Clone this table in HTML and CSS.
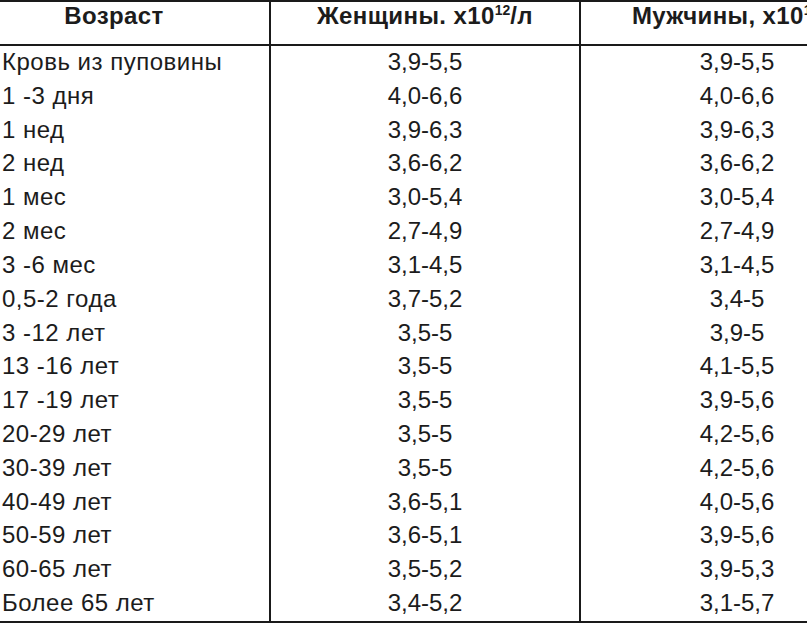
FILE: index.html
```html
<!DOCTYPE html>
<html lang="ru">
<head>
<meta charset="utf-8">
<title>Эритроциты</title>
<link rel="stylesheet" href="styles.css">
</head>
<body>
<div class="table">
  <div class="cell head first"><span class="shift">Возраст</span></div>
  <div class="cell head">Женщины. x10<sup>12</sup>/л</div>
  <div class="cell head last">Мужчины, x10<sup>12</sup>/л</div>

  <div class="cell first">Кровь из пуповины</div><div class="cell">3,9-5,5</div><div class="cell last">3,9-5,5</div>
  <div class="cell first">1 -3 дня</div><div class="cell">4,0-6,6</div><div class="cell last">4,0-6,6</div>
  <div class="cell first">1 нед</div><div class="cell">3,9-6,3</div><div class="cell last">3,9-6,3</div>
  <div class="cell first">2 нед</div><div class="cell">3,6-6,2</div><div class="cell last">3,6-6,2</div>
  <div class="cell first">1 мес</div><div class="cell">3,0-5,4</div><div class="cell last">3,0-5,4</div>
  <div class="cell first">2 мес</div><div class="cell">2,7-4,9</div><div class="cell last">2,7-4,9</div>
  <div class="cell first">3 -6 мес</div><div class="cell">3,1-4,5</div><div class="cell last">3,1-4,5</div>
  <div class="cell first">0,5-2 года</div><div class="cell">3,7-5,2</div><div class="cell last">3,4-5</div>
  <div class="cell first">3 -12 лет</div><div class="cell">3,5-5</div><div class="cell last">3,9-5</div>
  <div class="cell first">13 -16 лет</div><div class="cell">3,5-5</div><div class="cell last">4,1-5,5</div>
  <div class="cell first">17 -19 лет</div><div class="cell">3,5-5</div><div class="cell last">3,9-5,6</div>
  <div class="cell first">20-29 лет</div><div class="cell">3,5-5</div><div class="cell last">4,2-5,6</div>
  <div class="cell first">30-39 лет</div><div class="cell">3,5-5</div><div class="cell last">4,2-5,6</div>
  <div class="cell first">40-49 лет</div><div class="cell">3,6-5,1</div><div class="cell last">4,0-5,6</div>
  <div class="cell first">50-59 лет</div><div class="cell">3,6-5,1</div><div class="cell last">3,9-5,6</div>
  <div class="cell first">60-65 лет</div><div class="cell">3,5-5,2</div><div class="cell last">3,9-5,3</div>
  <div class="cell first">Более 65 лет</div><div class="cell">3,4-5,2</div><div class="cell last">3,1-5,7</div>
</div>
</body>
</html>
```
FILE: styles.css
```css
html, body {
  margin: 0;
  padding: 0;
  background: #ffffff;
  overflow: hidden;
}

.table {
  display: grid;
  grid-template-columns: 271px 310px 312px;
  grid-template-rows: 44px;
  grid-auto-rows: 33.82px;
  width: 893px;
  border-top: 2px solid #1a1a1a;
  border-bottom: 2px solid #1a1a1a;
  font-family: "Liberation Sans", Arial, sans-serif;
  font-size: 24px;
  color: #1c1c1c;
}

.cell {
  box-sizing: border-box;
  text-align: center;
  line-height: 31.4px;
  white-space: nowrap;
}

.cell.first {
  text-align: left;
  padding-left: 2px;
  letter-spacing: 0.5px;
  border-right: 2px solid #1a1a1a;
}

.cell.last {
  border-right: none;
}

.cell:nth-child(3n+2) {
  border-right: 2px solid #1a1a1a;
}

.head {
  font-weight: bold;
  line-height: 24px;
  padding-top: 2px;
  letter-spacing: 0.4px;
  border-bottom: 2px solid #1a1a1a;
}

.head.first {
  text-align: center;
  padding-left: 0;
  padding-right: 41px;
  letter-spacing: 0.4px;
}

.head sup {
  font-size: 14px;
  line-height: 0;
  vertical-align: 9px;
  letter-spacing: 0;
}
```
